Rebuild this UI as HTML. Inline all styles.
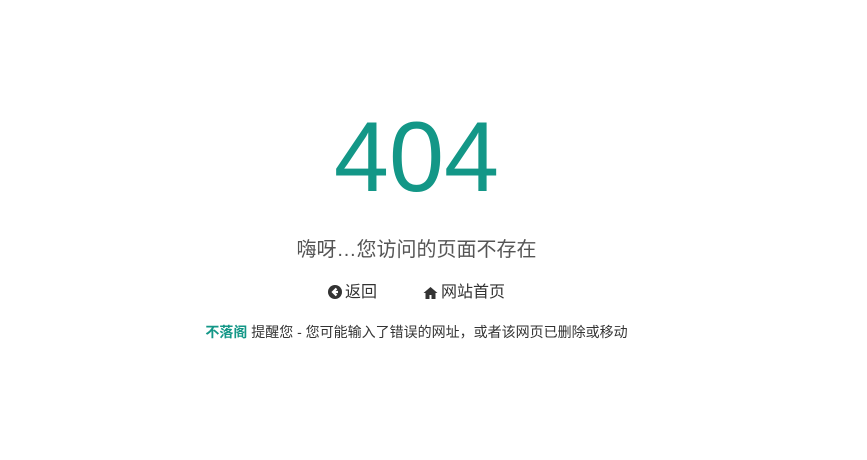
<!DOCTYPE html>
<html><head><meta charset="utf-8"><style>
body{margin:0;width:867px;height:460px;background:#fff;font-family:"Liberation Sans","Noto Sans CJK SC",sans-serif;color:#333;position:relative}
.n,.s,.l,.f{position:absolute;left:0;width:833px;text-align:center}
.n{top:99px;font-size:99px;line-height:115px;color:#139787}
.s{top:236px;font-size:20px;line-height:28px;color:#555}
.l{top:282px;font-size:16px;line-height:22px;color:#333}
.l span{display:inline-block;margin:0 23px}
.f{top:322px;font-size:14px;line-height:20px;color:#333}
.f b{color:#139787}
svg{vertical-align:-2px;margin-right:3px}
</style></head><body>
<div class="n">404</div>
<div class="s">嗨呀…您访问的页面不存在</div>
<div class="l"><span><svg width="14" height="14" viewBox="0 0 14 14"><circle cx="7" cy="7" r="7" fill="#333"/><path d="M8.5 3.5L5 7l3.5 3.5" stroke="#fff" stroke-width="2.2" fill="none"/><path d="M5 7h5" stroke="#fff" stroke-width="2.2"/></svg>返回</span><span><svg width="15" height="13" viewBox="0 0 15 13"><path d="M7.5 1L0.5 7h2v6h4V9h2v4h4V7h2z" fill="#333"/></svg>网站首页</span></div>
<div class="f"><b>不落阁</b> 提醒您 - 您可能输入了错误的网址，或者该网页已删除或移动</div>
</body></html>
